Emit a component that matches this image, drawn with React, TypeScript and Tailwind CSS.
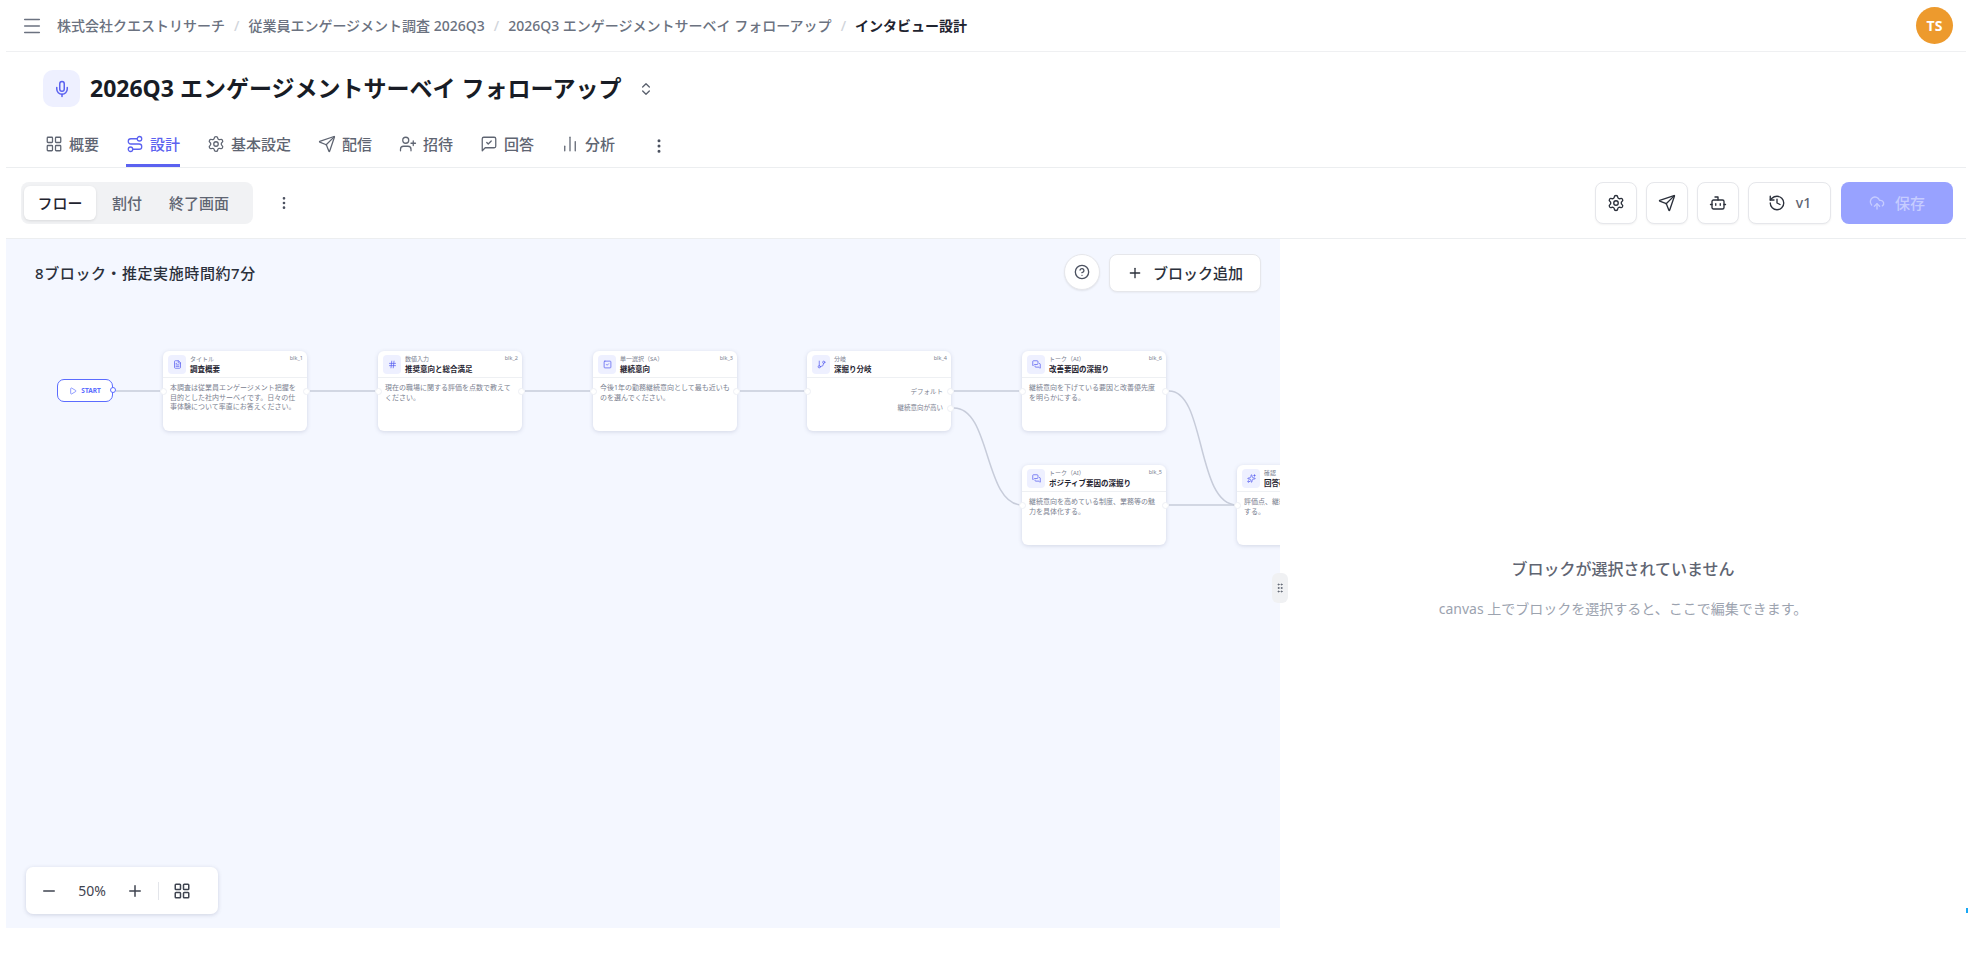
import React from "react";
import {
  Menu, Mic, ChevronsUpDown, LayoutGrid, Route, Settings, Send, UserPlus,
  ChartNoAxesColumn, EllipsisVertical, Bot, History, CloudUpload, FileText, Hash, SquareCheck,
  GitBranch, MessagesSquare, Sparkles, CircleHelp, Plus, Minus, GripVertical, Play,
} from "lucide-react";

const MessageCheck = ({ size = 18, strokeWidth = 2 }: { size?: number; strokeWidth?: number }) => (
  <svg width={size} height={size} viewBox="0 0 24 24" fill="none" stroke="currentColor" strokeWidth={strokeWidth} strokeLinecap="round" strokeLinejoin="round">
    <path d="M21 15a2 2 0 0 1-2 2H7l-4 4V5a2 2 0 0 1 2-2h14a2 2 0 0 1 2 2z" />
    <path d="m9 10 2 2 4-4" />
  </svg>
);

const crumbs = ["株式会社クエストリサーチ", "従業員エンゲージメント調査 2026Q3", "2026Q3 エンゲージメントサーベイ フォローアップ"];

const tabs = [
  { label: "概要", icon: LayoutGrid },
  { label: "設計", icon: Route, active: true },
  { label: "基本設定", icon: Settings },
  { label: "配信", icon: Send },
  { label: "招待", icon: UserPlus },
  { label: "回答", icon: MessageCheck },
  { label: "分析", icon: ChartNoAxesColumn },
];

const nodes = [
  { x: 157, y: 112, icon: FileText, kind: "タイトル", title: "調査概要", id: "blk_1", desc: "本調査は従業員エンゲージメント把握を目的とした社内サーベイです。日々の仕事体験について率直にお答えください。" },
  { x: 372, y: 112, icon: Hash, kind: "数値入力", title: "推奨意向と総合満足", id: "blk_2", desc: "現在の職場に関する評価を点数で教えてください。" },
  { x: 587, y: 112, icon: SquareCheck, kind: "単一選択（SA）", title: "継続意向", id: "blk_3", desc: "今後1年の勤務継続意向として最も近いものを選んでください。" },
  { x: 801, y: 112, icon: GitBranch, kind: "分岐", title: "深掘り分岐", id: "blk_4", branch: true },
  { x: 1016, y: 112, icon: MessagesSquare, kind: "トーク（AI）", title: "改善要因の深掘り", id: "blk_6", desc: "継続意向を下げている要因と改善優先度を明らかにする。" },
  { x: 1016, y: 226, icon: MessagesSquare, kind: "トーク（AI）", title: "ポジティブ要因の深掘り", id: "blk_5", desc: "継続意向を高めている制度、業務等の魅力を具体化する。" },
  { x: 1231, y: 226, icon: Sparkles, kind: "確認", title: "回答確認", id: "blk_7", desc: "評価点、継続意向、主な意見を最終確認する。" },
];

const edges = [
  "M110 152 H154",
  "M304 152 H369",
  "M519 152 H584",
  "M734 152 H798",
  "M948 152 H1013",
  "M948 169 C 985 169, 978 266, 1016 266",
  "M1163 152 C 1200 152, 1190 266, 1231 266",
  "M1163 266 H1231",
];

const Handle = ({ className }: { className: string }) => (
  <span className={`absolute w-[7px] h-[7px] rounded-full bg-white border border-[#eef0f5] ${className}`} />
);

const FlowNode = ({ node }: { node: (typeof nodes)[number] }) => {
  const Icon = node.icon;
  return (
    <div
      className="absolute w-[144px] h-[80px] bg-white rounded-[6px] shadow-[0_1px_4px_rgba(80,90,130,0.2)]"
      style={{ left: node.x, top: node.y }}
    >
      <div className="flex items-center gap-[4px] h-[27px] pl-[5px] pr-[4px] border-b border-[#eef0f3]">
        <div className="w-[18px] h-[19px] rounded-[4px] bg-[#eef0ff] flex items-center justify-center text-[#5b62f0] shrink-0">
          <Icon size={9} />
        </div>
        <div className="flex-1 min-w-0">
          <div className="text-[6px] leading-[9px] text-[#7b8190] whitespace-nowrap">{node.kind}</div>
          <div className="text-[7.5px] leading-[10px] font-bold text-[#1f2430] whitespace-nowrap">{node.title}</div>
        </div>
        <div className="self-start mt-[3px] text-[5.5px] leading-[9px] text-[#7b8190]">{node.id}</div>
      </div>
      {node.branch ? (
        <div className="pr-[8px] pt-[9px] text-right text-[6.5px] text-[#7b8190]">
          <div className="leading-[9px]">デフォルト</div>
          <div className="leading-[9px] mt-[7px]">継続意向が高い</div>
        </div>
      ) : (
        <div className="px-[7px] pt-[5px] text-[7px] leading-[9.6px] text-[#7b8190]">{node.desc}</div>
      )}
      <Handle className="left-[-3px] top-[37px]" />
      <Handle className="right-[-3px] top-[37px]" />
      {node.branch && <Handle className="right-[-3px] top-[54px]" />}
    </div>
  );
};

const ToolButton = ({ children, className = "w-[42px]" }: { children: React.ReactNode; className?: string }) => (
  <button className={`h-[42px] flex items-center justify-center gap-[10px] rounded-[8px] bg-white border border-[#e6e7eb] shadow-[0_1px_2px_rgba(0,0,0,0.05)] text-[#2b303b] ${className}`}>
    {children}
  </button>
);

export default function App() {
  return (
    <div className="relative w-full h-[953px] bg-white overflow-hidden font-['Noto_Sans','Noto_Sans_CJK_JP',sans-serif]">
      <div className="ml-[6px] w-[1960px] h-[928px] flex flex-col">
        {/* breadcrumb */}
        <header className="h-[52px] shrink-0 flex items-center pl-[15px] pr-[13px] border-b border-[#eff0f2]">
          <Menu size={22} strokeWidth={1.6} className="text-[#6b7280]" />
          <nav className="flex items-center ml-[14px] text-sm font-medium text-[#6b7280]">
            {crumbs.map((c) => (
              <React.Fragment key={c}>
                <span className="whitespace-nowrap">{c}</span>
                <span className="mx-[9px] text-[#d1d5db]">/</span>
              </React.Fragment>
            ))}
            <span className="font-bold text-[#1f2430]">インタビュー設計</span>
          </nav>
          <div className="ml-auto w-[37px] h-[37px] rounded-full bg-[#ed9a2d] flex items-center justify-center text-white text-sm font-bold">TS</div>
        </header>

        {/* title and tabs */}
        <div className="h-[116px] shrink-0 border-b border-[#eceef0] flex flex-col">
          <div className="flex items-center pl-[37px] pt-[18px]">
            <div className="w-[37px] h-[37px] rounded-[10px] bg-[#eef0ff] flex items-center justify-center text-[#5b62f0]">
              <Mic size={18} />
            </div>
            <h1 className="ml-[10px] text-[23px] leading-[37px] font-bold text-[#181c25] whitespace-nowrap">2026Q3 エンゲージメントサーベイ フォローアップ</h1>
            <ChevronsUpDown size={16} className="ml-[16px] text-[#5b616e]" />
          </div>
          <div className="flex items-end gap-[27px] pl-[39px] mt-auto">
            {tabs.map((t) => {
              const Icon = t.icon;
              return (
                <div
                  key={t.label}
                  className={`h-[43px] flex items-center gap-[6px] border-b-[3px] text-[15px] font-medium ${t.active ? "border-[#5b62f0] text-[#5b62f0]" : "border-transparent text-[#5f6572]"}`}
                >
                  <Icon size={18} strokeWidth={1.7} />
                  <span>{t.label}</span>
                </div>
              );
            })}
            <div className="h-[43px] flex items-center text-[#4b5160] ml-[8px]">
              <EllipsisVertical size={18} />
            </div>
          </div>
        </div>

        {/* toolbar */}
        <div className="h-[71px] shrink-0 flex items-center pl-[15px] pr-[13px] border-b border-[#eceef0]">
          <div className="h-[42px] w-[232px] rounded-[8px] bg-[#f1f2f4] flex items-center px-[3px] text-[15px] font-medium text-[#5f6572]">
            <div className="w-[72px] h-[34px] rounded-[6px] bg-white shadow-[0_1px_3px_rgba(0,0,0,0.1)] flex items-center justify-center text-[#1f2430]">フロー</div>
            <div className="ml-[16px]">割付</div>
            <div className="ml-[27px]">終了画面</div>
          </div>
          <EllipsisVertical size={16} className="ml-[23px] text-[#4b5160]" />
          <div className="ml-auto flex items-center gap-[9px]">
            <ToolButton><Settings size={18} strokeWidth={1.8} /></ToolButton>
            <ToolButton><Send size={18} strokeWidth={1.8} /></ToolButton>
            <ToolButton><Bot size={18} strokeWidth={1.8} /></ToolButton>
            <ToolButton className="w-[83px]">
              <History size={18} strokeWidth={1.8} />
              <span className="text-sm font-medium text-[#5f6572]">v1</span>
            </ToolButton>
            <button className="ml-[1px] w-[112px] h-[42px] rounded-[8px] bg-[#98a2ff] flex items-center justify-center gap-[10px] text-[#c6ccff] text-[15px] font-medium">
              <CloudUpload size={16} />
              <span>保存</span>
            </button>
          </div>
        </div>

        <div className="flex flex-1 min-h-0">
          {/* canvas */}
          <div className="relative w-[1274px] shrink-0 bg-[#f4f7ff] overflow-hidden">
            <div className="absolute left-[29px] top-[23px] text-[15px] leading-[22px] font-medium tracking-[0.6px] text-[#2b303b]">8ブロック・推定実施時間約7分</div>
            <button className="absolute left-[1058px] top-[15px] w-[36px] h-[36px] rounded-full bg-white border border-[#e6e7eb] shadow-[0_1px_2px_rgba(0,0,0,0.08)] flex items-center justify-center text-[#4b5160]">
              <CircleHelp size={16} />
            </button>
            <button className="absolute left-[1103px] top-[15px] w-[152px] h-[38px] rounded-[8px] bg-white border border-[#e6e7eb] shadow-[0_1px_2px_rgba(0,0,0,0.05)] flex items-center justify-center gap-[10px] text-[15px] font-medium text-[#2b303b]">
              <Plus size={16} />
              <span>ブロック追加</span>
            </button>

            <svg className="absolute inset-0" width="1274" height="689" fill="none">
              {edges.map((d) => (
                <path key={d} d={d} stroke="#c7ccda" strokeWidth="1.5" />
              ))}
            </svg>

            <div className="absolute left-[51px] top-[140px] w-[56px] h-[23px] rounded-[7px] border-[1.5px] border-[#5b6cff] bg-white flex items-center justify-center gap-[4px] text-[#5b6cff]">
              <Play size={8} />
              <span className="text-[6.5px] font-bold">START</span>
              <span className="absolute right-[-4px] top-[7px] w-[6px] h-[6px] rounded-full bg-white border border-[#5b6cff]" />
            </div>

            {nodes.map((n) => (
              <FlowNode key={n.id} node={n} />
            ))}

            <div className="absolute left-[20px] top-[628px] w-[192px] h-[47px] rounded-[7px] bg-white shadow-[0_1px_4px_rgba(60,70,110,0.2)] flex items-center text-[#3f4450]">
              <Minus size={18} className="ml-[14px]" />
              <span className="ml-[19px] w-[30px] text-center text-sm">50%</span>
              <Plus size={18} className="ml-[19px]" />
              <span className="ml-[14px] w-px h-[18px] bg-[#e3e5ea]" />
              <LayoutGrid size={18} className="ml-[14px]" />
            </div>
          </div>

          {/* right panel */}
          <div className="relative flex-1 flex flex-col items-center pt-[318px]">
            <div className="absolute left-[-8px] top-[334px] w-[16px] h-[30px] rounded-[6px] bg-[#f0f1f3] flex items-center justify-center text-[#5f6572]">
              <GripVertical size={12} />
            </div>
            <div className="text-base leading-[24px] font-medium text-[#5f6572]">ブロックが選択されていません</div>
            <div className="mt-[17px] text-sm leading-[22px] text-[#9ca3af]">canvas 上でブロックを選択すると、ここで編集できます。</div>
          </div>
        </div>
      </div>
      <span className="absolute left-[1966px] top-[908px] w-[2px] h-[5px] bg-[#18a8f5]" />
    </div>
  );
}
